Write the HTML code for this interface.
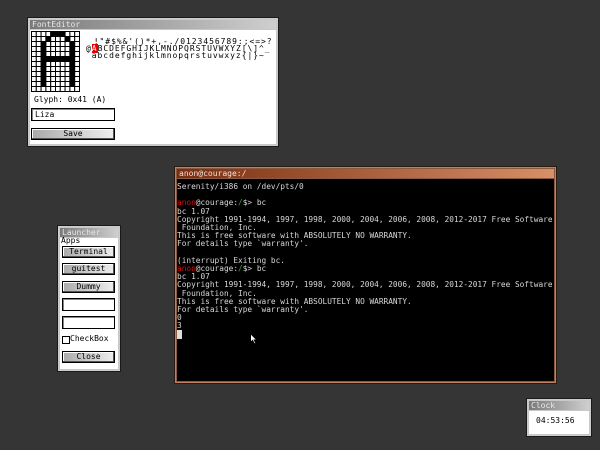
<!DOCTYPE html><html><head><style>
body{margin:0;width:600px;height:450px;background:#353535;position:relative;overflow:hidden;font-family:"DejaVu Sans Mono","Liberation Mono",monospace;font-size:8px;}
.w{position:absolute;border:1px solid #1a1a1a;box-shadow:inset 0 0 0 1px #ccc;background:#c8c8c8}
.tb{position:absolute;left:2px;right:2px;top:2px;height:9px;background:linear-gradient(90deg,#7a7a7a,#cfcfcf);color:#e8e8e8;font-size:8px;line-height:9px;padding-left:2px}
.c{position:absolute;left:2px;right:2px;top:12px;bottom:2px;background:#fff}
.a{position:absolute;white-space:pre;line-height:8px}
.btn{position:absolute;border:1px solid #000;background:linear-gradient(90deg,#aaa,#eee);box-shadow:inset -1px -1px 0 #555,inset 1px 1px 0 #fff;text-align:center;font-size:8px;line-height:9px}
.box{position:absolute;border:1px solid #000;background:#fff;box-shadow:inset 1px 1px 0 #888}
.t{position:absolute;white-space:pre;color:#d8d8d8;line-height:8.2px;font-size:7.8px}
</style></head><body>
<div class="w" style="left:27px;top:17px;width:250px;height:128px"><div class="tb">FontEditor</div><div class="c"></div></div>
<svg style="position:absolute;left:31px;top:31px" width="50" height="62" id="g"></svg>
<div class="a" style="left:88px;top:38px;font-size:8px;letter-spacing:0.95px"> !"#$%&amp;'()*+,-./0123456789:;&lt;=&gt;?</div>
<div class="a" style="left:86px;top:45px;font-size:8px;letter-spacing:0.95px">@<span style="background:#e00;color:#fff">A</span>BCDEFGHIJKLMNOPQRSTUVWXYZ[\]^_</div>
<div class="a" style="left:86px;top:52px;font-size:8px;letter-spacing:0.95px">`abcdefghijklmnopqrstuvwxyz{|}~</div>
<div class="a" style="left:34px;top:96px">Glyph: 0x41 (A)</div>
<div class="box" style="left:31px;top:108px;width:82px;height:11px"><span class="a" style="left:3px;top:2px">Liza</span></div>
<div class="btn" style="left:31px;top:128px;width:82px;height:10px">Save</div>

<div class="w" style="left:174px;top:166px;width:381px;height:216px;background:#8a5a40;border-color:#2a1a10;box-shadow:inset 0 0 0 1px #c08060"><div class="tb" style="background:linear-gradient(90deg,#7a2e10,#d89068);color:#f0e0d8">anon@courage:/</div><div class="c" style="background:#000"></div></div>
<div class="t" style="left:177px;top:183px">Serenity/i386 on /dev/pts/0

<span style="color:#d01010">anon</span>@courage:<span style="color:#30b030">/</span>$&gt; bc
bc 1.07
Copyright 1991-1994, 1997, 1998, 2000, 2004, 2006, 2008, 2012-2017 Free Software
 Foundation, Inc.
This is free software with ABSOLUTELY NO WARRANTY.
For details type `warranty'.

(interrupt) Exiting bc.
<span style="color:#d01010">anon</span>@courage:<span style="color:#30b030">/</span>$&gt; bc
bc 1.07
Copyright 1991-1994, 1997, 1998, 2000, 2004, 2006, 2008, 2012-2017 Free Software
 Foundation, Inc.
This is free software with ABSOLUTELY NO WARRANTY.
For details type `warranty'.
0
3
<span style="background:#ddd">&nbsp;</span></div>
<svg style="position:absolute;left:250px;top:333px" width="8" height="12"><path d="M0.5 0.5V9.5L2.5 7.5L4.5 11L6 10.3L4.2 7H7Z" fill="#fff" stroke="#000" stroke-width="1"/></svg>

<div class="w" style="left:57px;top:225px;width:62px;height:145px"><div class="tb">Launcher</div><div class="c"></div></div>
<div class="a" style="left:61px;top:237px">Apps</div>
<div class="btn" style="left:62px;top:246px;width:51px;height:10px">Terminal</div>
<div class="btn" style="left:62px;top:263px;width:51px;height:10px">guitest</div>
<div class="btn" style="left:62px;top:281px;width:51px;height:10px">Dummy</div>
<div class="box" style="left:62px;top:298px;width:51px;height:11px"></div>
<div class="box" style="left:62px;top:316px;width:51px;height:11px"></div>
<div class="box" style="left:62px;top:336px;width:6px;height:6px;box-shadow:none"></div>
<div class="a" style="left:70px;top:335px">CheckBox</div>
<div class="btn" style="left:62px;top:351px;width:51px;height:10px">Close</div>

<div class="w" style="left:526px;top:398px;width:64px;height:37px"><div class="tb">Clock</div><div class="c"></div></div>
<div class="a" style="left:536px;top:417px">04:53:56</div>
<script>
var k={0:[4,5,6],1:[3,7],5:[2,3,4,5,6,7,8]};var h='';
for(var r=0;r<12;r++)for(var c=0;c<10;c++){var b=(k[r]&&k[r].indexOf(c)>=0)||(r>=2&&r<=10&&(c==2||c==8));
h+='<rect x="'+(c*4.8+0.5)+'" y="'+(r*5+0.5)+'" width="4.8" height="5" fill="'+(b?'#000':'#fff')+'" stroke="#000" stroke-width="1"/>';}
document.getElementById('g').innerHTML=h;
</script>
</body></html>
